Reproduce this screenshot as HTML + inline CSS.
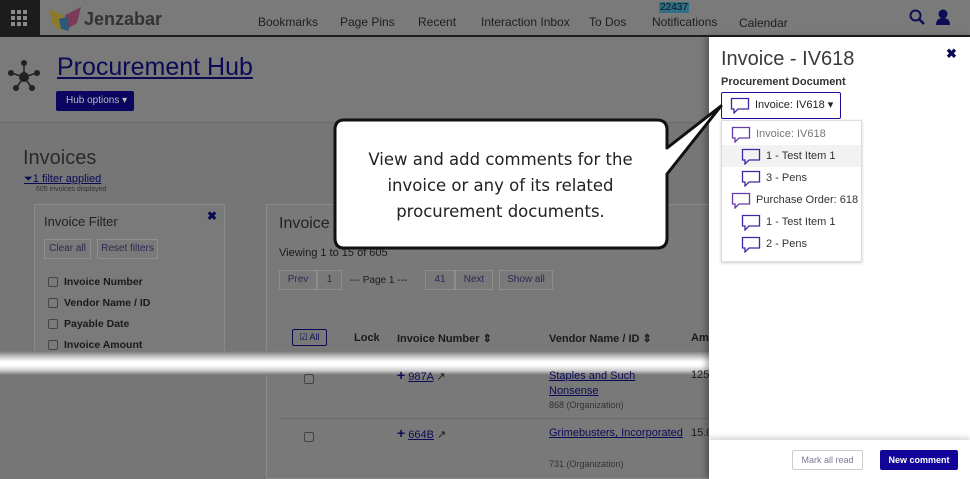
<!DOCTYPE html>
<html><head><style>
*{margin:0;padding:0;box-sizing:border-box}
html,body{width:970px;height:479px;overflow:hidden}
body{position:relative;background:#767676;font-family:"Liberation Sans",sans-serif;color:#1a1a1a}
.a{position:absolute}
.nav{font-size:12px;color:#1e1e1e;top:15px}
.chk{display:inline-block;width:10px;height:10px;border:1px solid #444;border-radius:2px;vertical-align:middle;margin-right:6px;background:#7a7a7a}
.btn{position:absolute;border:1px solid #8e8e8e;font-size:10px;color:#2a2a55;text-align:center;line-height:18px;height:20px}
.lnk{color:#0b0b55;text-decoration:underline}
.bub{display:inline-block;vertical-align:middle;margin-right:5px}
.dd div{height:22px;line-height:22px;font-size:11px;color:#333}
</style></head><body>
<div class="a" style="left:0;top:0;width:970px;height:36px;background:#7a7a7a"></div>
<div class="a" style="left:0;top:0;width:40px;height:37px;background:#1c1c1c"></div>
<div class="a" style="left:0;top:35px;width:970px;height:2px;background:#1c1c1c"></div>
<svg class="a" style="left:11px;top:10px" width="16" height="16"><g fill="#8a8a8a"><rect x="0" y="0" width="4" height="4"/><rect x="6" y="0" width="4" height="4"/><rect x="12" y="0" width="4" height="4"/><rect x="0" y="6" width="4" height="4"/><rect x="6" y="6" width="4" height="4"/><rect x="12" y="6" width="4" height="4"/><rect x="0" y="12" width="4" height="4"/><rect x="6" y="12" width="4" height="4"/><rect x="12" y="12" width="4" height="4"/></g></svg>
<svg class="a" style="left:47px;top:5px" width="36" height="28"><path d="M2 4 L16 10 L14 26 L6 20Z" fill="#8a7a2a"/><path d="M18 10 L34 2 L30 18 L20 24Z" fill="#7a3a5a"/><path d="M12 14 L20 12 L22 26 L14 24Z" fill="#2a5a7a"/></svg>
<div class="a" style="left:84px;top:9px;font-size:18px;color:#333;font-weight:bold">Jenzabar</div>
<div class="a nav" style="left:258px">Bookmarks</div>
<div class="a nav" style="left:340px">Page Pins</div>
<div class="a nav" style="left:418px">Recent</div>
<div class="a nav" style="left:481px">Interaction Inbox</div>
<div class="a nav" style="left:589px">To Dos</div>
<div class="a" style="left:659px;top:2px;width:30px;height:11px;background:#2f6f88;font-size:10px;line-height:11px;text-align:center;color:#111">22437</div>
<div class="a nav" style="left:652px">Notifications</div>
<div class="a nav" style="left:739px;top:16px">Calendar</div>
<svg class="a" style="left:909px;top:9px" width="16" height="16"><circle cx="6.5" cy="6.5" r="5" fill="none" stroke="#0d0d55" stroke-width="2"/><path d="M10 10 L15 15" stroke="#0d0d55" stroke-width="2.5"/></svg>
<svg class="a" style="left:935px;top:9px" width="16" height="16"><circle cx="8" cy="5" r="4.5" fill="#0d0d55"/><path d="M1 16 Q1 9 8 9 Q15 9 15 16Z" fill="#0d0d55"/></svg>
<div class="a" style="left:0;top:37px;width:709px;height:86px;background:#7a7a7a;border-bottom:1px solid #6a6a6a"></div>
<svg class="a" style="left:6px;top:58px" width="36" height="36"><g stroke="#222" stroke-width="1.5"><line x1="18" y1="19" x2="5" y2="15"/><line x1="18" y1="19" x2="31" y2="15"/><line x1="18" y1="19" x2="18" y2="5"/><line x1="18" y1="19" x2="10" y2="30"/><line x1="18" y1="19" x2="26" y2="30"/></g><g fill="#222"><circle cx="18" cy="19" r="5"/><circle cx="5" cy="15" r="3"/><circle cx="31" cy="15" r="3"/><circle cx="18" cy="5" r="3"/><circle cx="10" cy="30" r="3"/><circle cx="26" cy="30" r="3"/></g></svg>
<div class="a lnk" style="left:57px;top:53px;font-size:25px;color:#0b0b55">Procurement Hub</div>
<div class="a" style="left:56px;top:91px;width:78px;height:20px;background:#0c0660;border-radius:2px;color:#bbb;font-size:10px;line-height:20px;padding-left:10px">Hub options ▾</div>
<div class="a" style="left:23px;top:147px;font-size:20px;color:#2a2a2a">Invoices</div>
<div class="a lnk" style="left:24px;top:173px;font-size:11px">⏷1 filter applied</div>
<div class="a" style="left:36px;top:186px;font-size:7px;color:#333">605 invoices displayed</div>
<div class="a" style="left:34px;top:204px;width:191px;height:160px;border:1px solid #8a8a8a;background:#7a7a7a"></div>
<div class="a" style="left:44px;top:214px;font-size:13px;color:#222">Invoice Filter</div>
<div class="a" style="left:207px;top:209px;font-size:12px;color:#0b0b55;font-weight:bold">✖</div>
<div class="btn" style="left:44px;top:239px;width:47px">Clear all</div>
<div class="btn" style="left:97px;top:239px;width:61px">Reset filters</div>
<div class="a" style="left:48px;top:272px;font-size:10.5px;font-weight:bold;line-height:21px;color:#1a1a1a"><div><span class="chk"></span>Invoice Number</div><div><span class="chk"></span>Vendor Name / ID</div><div><span class="chk"></span>Payable Date</div><div><span class="chk"></span>Invoice Amount</div></div>
<div class="a" style="left:266px;top:204px;width:450px;height:275px;border:1px solid #8a8a8a;background:#797979"></div>
<div class="a" style="left:279px;top:215px;font-size:16px;color:#222">Invoice</div>
<div class="a" style="left:279px;top:247px;font-size:11px">Viewing 1 to 15 of 605</div>
<div class="btn" style="left:279px;top:270px;width:38px">Prev</div>
<div class="btn" style="left:317px;top:270px;width:25px">1</div>
<div class="a" style="left:350px;top:275px;font-size:10px">--- Page 1 ---</div>
<div class="btn" style="left:425px;top:270px;width:30px">41</div>
<div class="btn" style="left:455px;top:270px;width:38px">Next</div>
<div class="btn" style="left:499px;top:270px;width:54px">Show all</div>
<div class="a" style="left:292px;top:329px;width:35px;height:17px;border:1px solid #0b0b55;border-radius:2px;font-size:9px;line-height:15px;text-align:center;color:#0b0b55">☑ All</div>
<div class="a" style="left:354px;top:332px;font-size:11px;font-weight:bold">Lock</div>
<div class="a" style="left:397px;top:332px;font-size:11px;font-weight:bold">Invoice Number ⇕</div>
<div class="a" style="left:549px;top:332px;font-size:11px;font-weight:bold">Vendor Name / ID ⇕</div>
<div class="a" style="left:691px;top:332px;font-size:11px;font-weight:bold">Am</div>
<div class="a" style="left:279px;top:352px;width:430px;height:1px;background:#6a6a6a"></div>
<div class="a" style="left:279px;top:418px;width:430px;height:1px;background:#6a6a6a"></div>
<div class="a" style="left:304px;top:428px"><span class="chk"></span></div>
<div class="a" style="left:397px;top:425px;font-size:11px"><b style="color:#0b0b55;font-size:14px">+</b> <span class="lnk">664B</span> ↗</div>
<div class="a lnk" style="left:549px;top:427px;font-size:11px">Grimebusters, Incorporated</div>
<div class="a" style="left:549px;top:459px;font-size:9px;color:#333">731 (Organization)</div>
<div class="a" style="left:691px;top:427px;font-size:11px">15.0</div>
<div class="a" style="left:0;top:351px;width:709px;height:24px;background:linear-gradient(#767676,#d8d8d8 30%,#fff 45%,#fff 60%,#d0d0d0 80%,#767676)"></div>
<div class="a" style="left:304px;top:370px"><span class="chk"></span></div>
<div class="a" style="left:397px;top:367px;font-size:11px"><b style="color:#0b0b55;font-size:14px">+</b> <span class="lnk">987A</span> ↗</div>
<div class="a lnk" style="left:549px;top:369px;font-size:11px;line-height:15px">Staples and Such<br>Nonsense</div>
<div class="a" style="left:549px;top:400px;font-size:9px;color:#333">868 (Organization)</div>
<div class="a" style="left:691px;top:369px;font-size:11px">125</div>
<div class="a" style="left:709px;top:37px;width:261px;height:442px;background:#fff;box-shadow:-3px 0 6px rgba(0,0,0,.3)"></div>
<div class="a" style="left:721px;top:48px;font-size:20px;color:#3a3a3a">Invoice - IV618</div>
<div class="a" style="left:946px;top:46px;font-size:13px;color:#0b0b55;font-weight:bold">✖</div>
<div class="a" style="left:721px;top:76px;font-size:11px;font-weight:bold;color:#333">Procurement Document</div>
<div class="a" style="left:721px;top:92px;width:120px;height:27px;border:1px solid #1a0aa0;border-radius:2px;font-size:11px;line-height:25px;padding-left:8px;color:#222"><svg class="bub" width="20" height="17"><path d="M1.5 1.5 H18.5 V12 H8 L4 16 V12 H1.5Z" fill="none" stroke="#3a2aa8" stroke-width="1.3"/></svg>Invoice: IV618 ▾</div>
<div class="a dd" style="left:721px;top:120px;width:141px;height:142px;background:#fff;border:1px solid #ddd;box-shadow:0 1px 3px rgba(0,0,0,.2)">
<div style="padding-left:9px;margin-top:2px;color:#777"><svg class="bub" width="20" height="17"><path d="M1.5 1.5 H18.5 V12 H8 L4 16 V12 H1.5Z" fill="none" stroke="#6a3aa8" stroke-width="1.3"/></svg>Invoice: IV618</div>
<div style="padding-left:19px;background:#f2f2f2"><svg class="bub" width="20" height="17"><path d="M1.5 1.5 H18.5 V12 H8 L4 16 V12 H1.5Z" fill="none" stroke="#3a2aa8" stroke-width="1.3"/></svg>1 - Test Item 1</div>
<div style="padding-left:19px"><svg class="bub" width="20" height="17"><path d="M1.5 1.5 H18.5 V12 H8 L4 16 V12 H1.5Z" fill="none" stroke="#3a2aa8" stroke-width="1.3"/></svg>3 - Pens</div>
<div style="padding-left:9px"><svg class="bub" width="20" height="17"><path d="M1.5 1.5 H18.5 V12 H8 L4 16 V12 H1.5Z" fill="none" stroke="#6a3aa8" stroke-width="1.3"/></svg>Purchase Order: 618</div>
<div style="padding-left:19px"><svg class="bub" width="20" height="17"><path d="M1.5 1.5 H18.5 V12 H8 L4 16 V12 H1.5Z" fill="none" stroke="#3a2aa8" stroke-width="1.3"/></svg>1 - Test Item 1</div>
<div style="padding-left:19px"><svg class="bub" width="20" height="17"><path d="M1.5 1.5 H18.5 V12 H8 L4 16 V12 H1.5Z" fill="none" stroke="#3a2aa8" stroke-width="1.3"/></svg>2 - Pens</div>
</div>
<div class="a" style="left:709px;top:440px;width:261px;height:39px;background:#fff;box-shadow:0 -3px 5px rgba(0,0,0,.15)"></div>
<div class="a" style="left:792px;top:450px;width:71px;height:20px;border:1px solid #ccc;border-radius:2px;font-size:9px;line-height:18px;text-align:center;color:#7a7a9a">Mark all read</div>
<div class="a" style="left:880px;top:450px;width:78px;height:20px;background:#12069a;border-radius:2px;font-size:9px;line-height:20px;text-align:center;color:#fff;font-weight:bold">New comment</div>
<svg class="a" style="left:330px;top:100px" width="400" height="155"><path d="M14 20 H327 Q337 20 337 30 V48 L391 6 L337 74 V138 Q337 148 327 148 H14 Q5 148 5 138 V30 Q5 20 14 20Z" fill="#fff" stroke="#111" stroke-width="3" stroke-linejoin="round"/></svg>
<div class="a" style="left:334px;top:147px;width:333px;text-align:center;font-family:'DejaVu Sans',sans-serif;font-size:16.5px;line-height:26px;color:#222">View and add comments for the<br>invoice or any of its related<br>procurement documents.</div>
</body></html>
